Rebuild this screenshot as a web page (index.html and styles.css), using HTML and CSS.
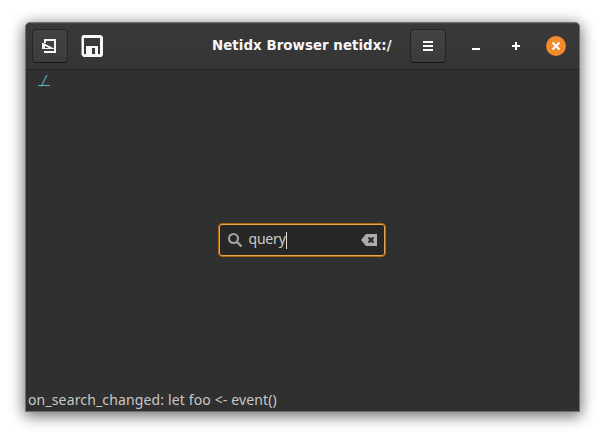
FILE: index.html
```html
<!DOCTYPE html>
<html lang="en">
<head>
<meta charset="utf-8">
<title>Netidx Browser</title>
<link rel="stylesheet" href="styles.css">
</head>
<body>
<main class="window">
  <header class="headerbar">
    <button class="button" aria-label="Design mode">
      <svg width="16" height="16" viewBox="0 0 16 16"><path d="M3 5V2H13V14H2" fill="none" stroke="#f7f7f7" stroke-width="2"/><path d="M0 5H1.5L12 10.5V11H0Z" fill="#f7f7f7"/><path d="M3 8 7 10H3Z" fill="#3b3b3b"/></svg>
    </button>
    <button class="button flat" aria-label="Save">
      <svg width="22" height="22" viewBox="0 0 22 22"><path d="M2 0H20L22 2V20L20.5 22H2.5L.5 20V2Z" fill="#f7f7f7"/><path d="M3 3H19V19H17V11H5V19H3Z" fill="#393939"/><path d="M11 13H14V19H11Z" fill="#393939"/></svg>
    </button>
    <h1 class="title">Netidx Browser netidx:/</h1>
    <button class="button" aria-label="Menu">
      <svg width="16" height="16" viewBox="0 0 16 16"><path d="M3 4H13M3 8H13M3 12H13" stroke="#f7f7f7" stroke-width="2"/></svg>
    </button>
    <nav class="controls">
      <svg width="20" height="20" viewBox="0 0 20 20"><path d="M6 13H14" stroke="#fff" stroke-width="2"/></svg>
      <svg width="20" height="20" viewBox="0 0 20 20"><path d="M6 10H14M10 6V14" stroke="#fff" stroke-width="2"/></svg>
      <svg width="20" height="20" viewBox="0 0 20 20"><circle cx="10" cy="10" r="10" fill="#f28b2b"/><path d="M6.5 6.5 13.5 13.5M13.5 6.5 6.5 13.5" stroke="#fff" stroke-width="2.2"/></svg>
    </nav>
  </header>
  <div class="pathbar"><a class="path">/</a></div>
  <section class="content">
    <div class="search">
      <svg width="16" height="16" viewBox="0 0 16 16"><circle cx="6.5" cy="6.5" r="4.5" fill="none" stroke="#a3a3a3" stroke-width="2.1"/><path d="M10 10 14.5 14.5" stroke="#a3a3a3" stroke-width="2.4"/></svg>
      <span class="query">query</span><i class="caret"></i>
      <svg class="clear" width="16" height="16" viewBox="0 0 16 16"><path d="M5 2H16V14H5L0 8Z" fill="#acacac"/><path d="M7.5 5.5 12.5 10.5M12.5 5.5 7.5 10.5" stroke="#252525" stroke-width="2"/></svg>
    </div>
  </section>
  <footer class="status">on_search_changed: let foo &lt;- event()</footer>
</main>
</body>
</html>
```
FILE: styles.css
```css
* { box-sizing: border-box; }
body { margin: 0; padding: 22px 25px 28px; height: 440px; background: #fff; overflow: hidden; font-family: "Noto Sans", sans-serif; }
.window { width: 555px; height: 390px; display: flex; flex-direction: column; border: 1px solid #707070; border-radius: 5px 5px 0 0; background: #303030; box-shadow: 0 3px 14px 1px rgba(0,0,0,.5), 0 3px 20px rgba(0,0,0,.1); overflow: hidden; }
.headerbar { height: 47px; flex: none; display: flex; align-items: center; padding: 0 12px 1px 6px; background: linear-gradient(#393939, #353535); border-top: 1px solid #444; border-bottom: 1px solid #222; }
.button { display: flex; align-items: center; justify-content: center; width: 36px; height: 34px; padding: 0; flex: none; border: 1px solid #252525; border-bottom-color: #151515; border-radius: 4px; background: linear-gradient(#424242, #3c3c3c); }
.button.flat { margin-left: 6px; border-color: transparent; background: transparent; }
.title { margin: 0 0 1px 102px; width: 198px; white-space: nowrap; color: #f7f7f7; font: bold 13.33px/20px "DejaVu Sans", sans-serif; letter-spacing: .07px; }
.controls { display: flex; gap: 20px; margin-left: 20px; }
.pathbar { height: 25px; flex: none; padding: 0 12px; border-bottom: 1px solid #2b2b2b; }
.path { display: block; width: 12px; height: 16px; border-bottom: 1px solid #5bb1c5; color: #5bb1c5; font: italic 13.33px/21px "DejaVu Sans", sans-serif; text-align: center; }
.content { flex: 1; display: flex; align-items: center; justify-content: center; padding: 0 2px 1px 0; }
.search { width: 168px; height: 34px; display: flex; align-items: center; padding: 0 8px; border: 1px solid #b5640f; border-radius: 4px; background: #272727; box-shadow: inset 0 0 0 1px #f0a250; color: #ccc; }
.query { margin: 0 0 2px 6px; font-size: 14px; line-height: 20px; letter-spacing: -.2px; }
.caret { width: 1px; height: 17px; background: #ddd; }
.clear { margin-left: auto; }
.status { height: 25px; flex: none; padding: 2px 2px 0; border-top: 1px solid #2b2b2b; color: #c8c8c8; font-size: 14px; line-height: 22px; letter-spacing: .14px; white-space: nowrap; }
```
